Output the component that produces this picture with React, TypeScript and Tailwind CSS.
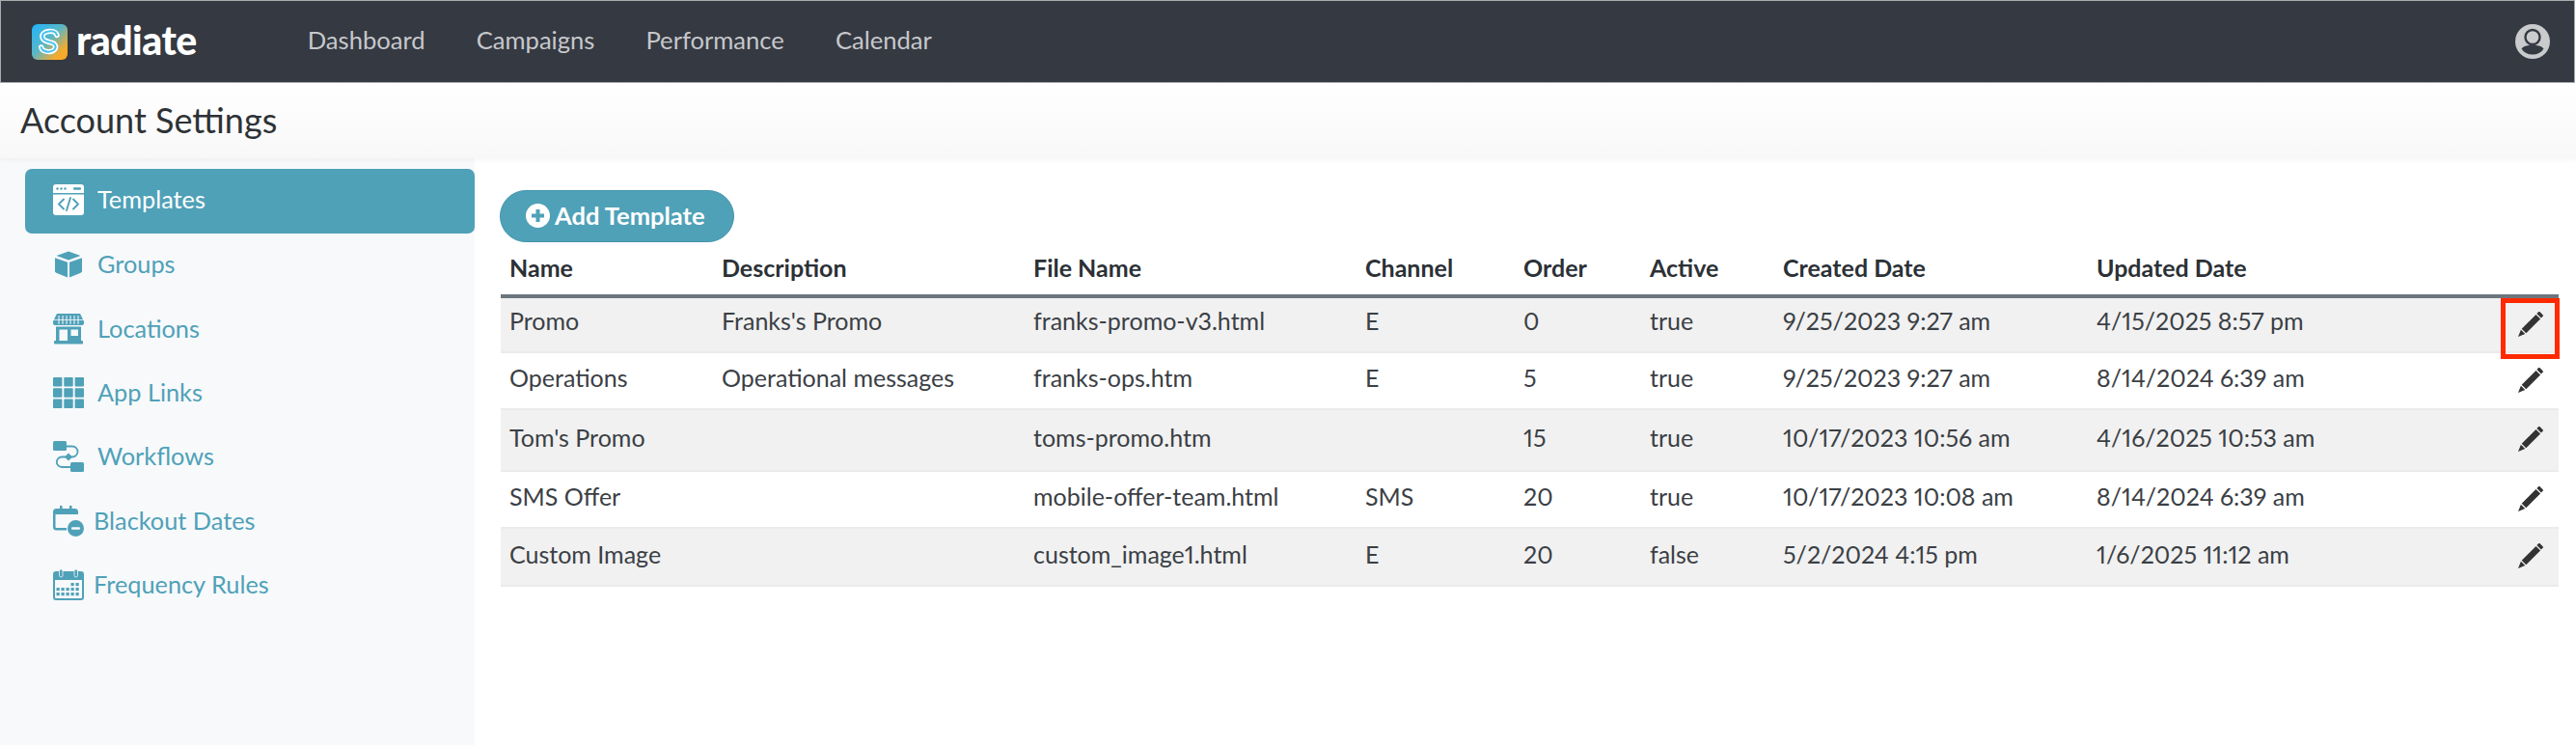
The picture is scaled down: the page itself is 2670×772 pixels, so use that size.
import React from 'react';

const rows = [
  { h: 'h-[58px]', pb: 'pb-[7px]', name: 'Promo', desc: "Franks's Promo", file: 'franks-promo-v3.html', ch: 'E', order: '0', active: 'true', created: '9/25/2023 9:27 am', updated: '4/15/2025 8:57 pm', bg: 'bg-[#f1f1f1]' },
  { h: 'h-[59px]', pb: 'pb-[5px]', name: 'Operations', desc: 'Operational messages', file: 'franks-ops.htm', ch: 'E', order: '5', active: 'true', created: '9/25/2023 9:27 am', updated: '8/14/2024 6:39 am', bg: 'bg-white' },
  { h: 'h-[64px]', pb: 'pb-[5px]', name: "Tom's Promo", desc: '', file: 'toms-promo.htm', ch: '', order: '15', active: 'true', created: '10/17/2023 10:56 am', updated: '4/16/2025 10:53 am', bg: 'bg-[#f1f1f1]' },
  { h: 'h-[59px]', pb: 'pb-[5px]', name: 'SMS Offer', desc: '', file: 'mobile-offer-team.html', ch: 'SMS', order: '20', active: 'true', created: '10/17/2023 10:08 am', updated: '8/14/2024 6:39 am', bg: 'bg-white' },
  { h: 'h-[60px]', pb: 'pb-[5px]', name: 'Custom Image', desc: '', file: 'custom_image1.html', ch: 'E', order: '20', active: 'false', created: '5/2/2024 4:15 pm', updated: '1/6/2025 11:12 am', bg: 'bg-[#f1f1f1]' },
];

const headers = ['Name', 'Description', 'File Name', 'Channel', 'Order', 'Active', 'Created Date', 'Updated Date'];

function Logo() {
  return (
    <svg viewBox="0 0 37 37" className="w-[37px] h-[37px] shrink-0">
      <defs>
        <linearGradient id="logoGrad" x1="0" y1="0" x2="1" y2="1">
          <stop offset="0" stopColor="#22b4fb" />
          <stop offset="0.45" stopColor="#58b7c8" />
          <stop offset="0.8" stopColor="#f5ab2e" />
          <stop offset="1" stopColor="#fca61f" />
        </linearGradient>
      </defs>
      <rect width="37" height="37" rx="6" fill="url(#logoGrad)" />
      <path d="M26 11.5C25 8 21 7 17.5 7.5 12.5 8 9.5 11 11.5 15c1.5 3 6 3.2 9 4.2 3.5 1 5.2 3.6 3.4 6.6-2 3.2-8 3.6-11.5 1.7-1.5-.8-2.4-2-2.7-3.5" fill="none" stroke="#fff" strokeWidth="5.4" strokeLinecap="round" />
      <path d="M26 11.5C25 8 21 7 17.5 7.5 12.5 8 9.5 11 11.5 15c1.5 3 6 3.2 9 4.2 3.5 1 5.2 3.6 3.4 6.6-2 3.2-8 3.6-11.5 1.7-1.5-.8-2.4-2-2.7-3.5" fill="none" stroke="#45c1f5" strokeWidth="2" strokeLinecap="round" />
    </svg>
  );
}

function TemplatesIcon() {
  return (
    <svg viewBox="0 0 32 32" className="w-[32px] h-[32px]">
      <path d="M3 0h26a3 3 0 0 1 3 3v6H0V3a3 3 0 0 1 3-3z" fill="#fff" />
      <path d="M0 10.5h32V29a3 3 0 0 1-3 3H3a3 3 0 0 1-3-3z" fill="#fff" />
      <circle cx="4.5" cy="4.5" r="1.2" fill="#4fa1b8" />
      <circle cx="8.5" cy="4.5" r="1.2" fill="#4fa1b8" />
      <circle cx="12.5" cy="4.5" r="1.2" fill="#4fa1b8" />
      <rect x="21" y="3.3" width="8" height="2.4" rx="1" fill="#4fa1b8" />
      <path d="M11 15.5l-5 5 5 5M21 15.5l5 5-5 5M18 14l-4 13" fill="none" stroke="#4fa1b8" strokeWidth="1.9" strokeLinecap="round" strokeLinejoin="round" />
    </svg>
  );
}

function CubeIcon() {
  return (
    <svg viewBox="0 0 32 32" className="w-[32px] h-[32px]" fill="#4fa1b8">
      <path d="M16 2.5L3.5 6.9 16 11.5l12.5-4.6z" />
      <path d="M2 9.200v13.600c0 .9.500 1.600 1.300 1.900L15 29.400V13.700z" />
      <path d="M30 9.200v13.600c0 .9-.5 1.600-1.300 1.900L17 29.400V13.700z" />
    </svg>
  );
}

function StoreIcon() {
  return (
    <svg viewBox="0 0 32 32" className="w-[32px] h-[32px]" fill="#4fa1b8">
      <path d="M4 0h24l4 8v2a2 2 0 0 1-2 2H2a2 2 0 0 1-2-2V8z" />
      <path d="M6 2v9M10 2v9M14 2v9M18 2v9M22 2v9M26 2v9" stroke="#f7f9fb" strokeWidth="1" />
      <path d="M0 6.500h32" stroke="#f7f9fb" strokeWidth="0.8" />
      <path fillRule="evenodd" d="M3 13.500h26V28H3zM6.500 16.500V28H15V16.500zM18.500 16.500v6.500H26v-6.500z" />
      <rect x="1" y="28" width="30" height="3.5" rx="1" />
    </svg>
  );
}

function GridIcon() {
  const cells = [0, 11.3, 22.6];
  return (
    <svg viewBox="0 0 32 32" className="w-[32px] h-[32px]" fill="#4fa1b8">
      {cells.flatMap((y) => cells.map((x) => <rect key={`${x}-${y}`} x={x} y={y} width="9.4" height="9.4" rx="0.8" />))}
    </svg>
  );
}

function WorkflowIcon() {
  return (
    <svg viewBox="0 0 32 32" className="w-[32px] h-[32px]" fill="#4fa1b8">
      <rect x="0" y="0" width="14" height="10" rx="1.5" />
      <rect x="18" y="22" width="14" height="10" rx="1.5" />
      <path d="M14 5.500h6a5.500 5.500 0 0 1 0 11h-11a5 5 0 0 0 0 10.500h9" fill="none" stroke="#4fa1b8" strokeWidth="1.8" />
      <path d="M16 12.500l4 4-4 4-4-4z" />
    </svg>
  );
}

function CalendarMinusIcon() {
  return (
    <svg viewBox="0 0 32 32" className="w-[32px] h-[32px]" fill="#4fa1b8">
      <path d="M7 0h2.500v3h7.500V0h2.500v3h3A3.500 3.500 0 0 1 26 6.500V9H0V6.500A3.500 3.500 0 0 1 3.500 3H7z" />
      <path d="M0 9h2.500v13a1 1 0 0 0 1 1H14v2.500H3.500A3.500 3.500 0 0 1 0 22z" />
      <path d="M23.500 15a8.500 8.500 0 1 1 0 17 8.500 8.500 0 0 1 0-17z" />
      <rect x="19" y="22.3" width="9" height="2.4" rx="1" fill="#f7f9fb" />
    </svg>
  );
}

function CalendarIcon() {
  const dots = [[5, 20], [10, 20], [15, 20], [20, 20], [25, 20], [5, 25], [10, 25], [15, 25], [20, 25], [25, 25], [20, 15], [25, 15]];
  return (
    <svg viewBox="0 0 32 32" className="w-[32px] h-[32px]" fill="#4fa1b8">
      <path fillRule="evenodd" d="M3 2h26a3 3 0 0 1 3 3v24a3 3 0 0 1-3 3H3a3 3 0 0 1-3-3V5a3 3 0 0 1 3-3zM2 11v18a1 1 0 0 0 1 1h26a1 1 0 0 0 1-1V11z" />
      <rect x="6.5" y="0" width="3.5" height="8" rx="1.7" stroke="#f7f9fb" strokeWidth="0.8" />
      <rect x="22" y="0" width="3.5" height="8" rx="1.7" stroke="#f7f9fb" strokeWidth="0.8" />
      {dots.map(([x, y]) => <rect key={`${x}-${y}`} x={x - 1.5} y={y - 1} width="3.2" height="3.2" />)}
    </svg>
  );
}

function PencilIcon() {
  return (
    <svg viewBox="0 0 26 26" className="w-[26px] h-[26px]" fill="#333">
      <path d="M20.300 1.100l1-1a1 1 0 0 1 1.100 0l3.400 3.400a1 1 0 0 1 0 1.100l-1.900 1.900-4.500-4.500z" />
      <path d="M18.500 2.900l4.600 4.600L8.300 22.300l-4.600-4.600z" />
      <path d="M2.900 18.800l4.300 4.300L0 26z" />
    </svg>
  );
}

function UserIcon() {
  return (
    <svg viewBox="0 0 36 36" className="w-[36px] h-[36px]">
      <circle cx="18" cy="18" r="18" fill="#c9cbcc" />
      <circle cx="18" cy="13.5" r="7.5" fill="#c9cbcc" stroke="#353942" strokeWidth="2.4" />
      <path d="M6.500 25.500C9 22.500 13 21.800 18 21.800s9 .7 11.500 3.700C27 29.500 23 31.500 18 31.500S9 29.500 6.500 25.500z" fill="#353942" />
    </svg>
  );
}

const menu = [
  { label: 'Templates', icon: <TemplatesIcon />, active: true, gap: 'gap-[14px]', h: 'h-[67px]' },
  { label: 'Groups', icon: <CubeIcon />, gap: 'gap-[14px]', h: 'h-[67px]' },
  { label: 'Locations', icon: <StoreIcon />, gap: 'gap-[14px]', h: 'h-[66px]' },
  { label: 'App Links', icon: <GridIcon />, gap: 'gap-[14px]', h: 'h-[66px]' },
  { label: 'Workflows', icon: <WorkflowIcon />, gap: 'gap-[14px]', h: 'h-[67px]' },
  { label: 'Blackout Dates', icon: <CalendarMinusIcon />, gap: 'gap-[10px]', h: 'h-[66px]' },
  { label: 'Frequency Rules', icon: <CalendarIcon />, gap: 'gap-[10px]', h: 'h-[67px]' },
];

export default function App() {
  return (
    <div className="w-full h-[772px] bg-white overflow-hidden flex flex-col font-['Lato',sans-serif] text-[25px] text-[#3b4045] proportional-nums">
      <header className="h-[86px] shrink-0 bg-[#353942] border border-[#a9abad] flex items-center pl-[32px] pr-[25px] mr-px">
        <Logo />
        <span className="ml-[9px] text-[41px] font-black text-white tracking-[-0.5px] leading-none pb-[4px]">radiate</span>
        <nav className="flex ml-[115px] pb-[3px] text-[25.6px] text-[#c6c8cb] gap-[53px]">
          <a>Dashboard</a>
          <a>Campaigns</a>
          <a>Performance</a>
          <a>Calendar</a>
        </nav>
        <div className="ml-auto"><UserIcon /></div>
      </header>
      <div className="h-[78px] shrink-0 bg-gradient-to-b from-white to-[#f8f8f8] flex items-center pl-[21px] pb-[2px] relative shadow-[0_2px_4px_rgba(0,0,0,0.04)]">
        <h1 className="text-[36px] text-[#2e3236]">Account Settings</h1>
      </div>
      <div className="flex flex-1 min-h-0">
        <aside className="w-[492px] shrink-0 bg-[#f7f9fb] pt-[11px] pl-[26px] text-[25.3px] text-[#4fa1b8]">
          {menu.map((m) => (
            <div key={m.label} className={`flex items-center pl-[29px] pb-[3px] ${m.gap} ${m.h} ${m.active ? 'bg-[#4fa1b8] text-white rounded-[7px]' : ''}`}>
              {m.icon}
              <span>{m.label}</span>
            </div>
          ))}
        </aside>
        <main className="flex-1 min-w-0 pt-[33px] pl-[26px] pr-[18px]">
          <button className="w-[243px] h-[54px] rounded-full bg-[#4fa1b8] border border-[#4796ac] text-white text-[25.5px] font-bold flex items-center pl-[26px] pb-[2px] gap-[5px]">
            <svg viewBox="0 0 25 25" className="w-[25px] h-[25px] shrink-0">
              <circle cx="12.5" cy="12.5" r="12.5" fill="#fff" />
              <path d="M12.5 6v13M6 12.5h13" stroke="#4fa1b8" strokeWidth="4" />
            </svg>
            Add Template
          </button>
          <table className="ml-px w-[2133px] table-fixed border-collapse">
            <colgroup>
              <col className="w-[220px]" />
              <col className="w-[323px]" />
              <col className="w-[344px]" />
              <col className="w-[164px]" />
              <col className="w-[131px]" />
              <col className="w-[138px]" />
              <col className="w-[325px]" />
              <col className="w-[488px]" />
              <col />
            </colgroup>
            <thead>
              <tr className="h-[56px] border-b-[4px] border-[#6d767d] text-[#2c3136]">
                {headers.map((h) => (
                  <th key={h} className="pl-[9px] text-left font-bold">{h}</th>
                ))}
              </tr>
            </thead>
            <tbody>
              {rows.map((r, i) => (
                <tr key={r.name} className={`${r.h} ${r.bg} border-b-2 border-[#ebebeb]`}>
                  <td className={`pl-[9px] ${r.pb}`}>{r.name}</td>
                  <td className={`pl-[9px] ${r.pb}`}>{r.desc}</td>
                  <td className={`pl-[9px] ${r.pb}`}>{r.file}</td>
                  <td className={`pl-[9px] ${r.pb}`}>{r.ch}</td>
                  <td className={`pl-[9px] ${r.pb}`}>{r.order}</td>
                  <td className={`pl-[9px] ${r.pb}`}>{r.active}</td>
                  <td className={`pl-[9px] ${r.pb}`}>{r.created}</td>
                  <td className={`pl-[9px] ${r.pb} relative`}>
                    {r.updated}
                    <div className="absolute right-[16px] top-[calc(50%-1px)] -translate-y-1/2 flex"><PencilIcon /></div>
                    {i === 0 && <div className="absolute right-[-1px] top-0 w-[61px] h-[63px] border-[5px] border-[#ff2a00]" />}
                  </td>
                </tr>
              ))}
            </tbody>
          </table>
        </main>
      </div>
    </div>
  );
}
